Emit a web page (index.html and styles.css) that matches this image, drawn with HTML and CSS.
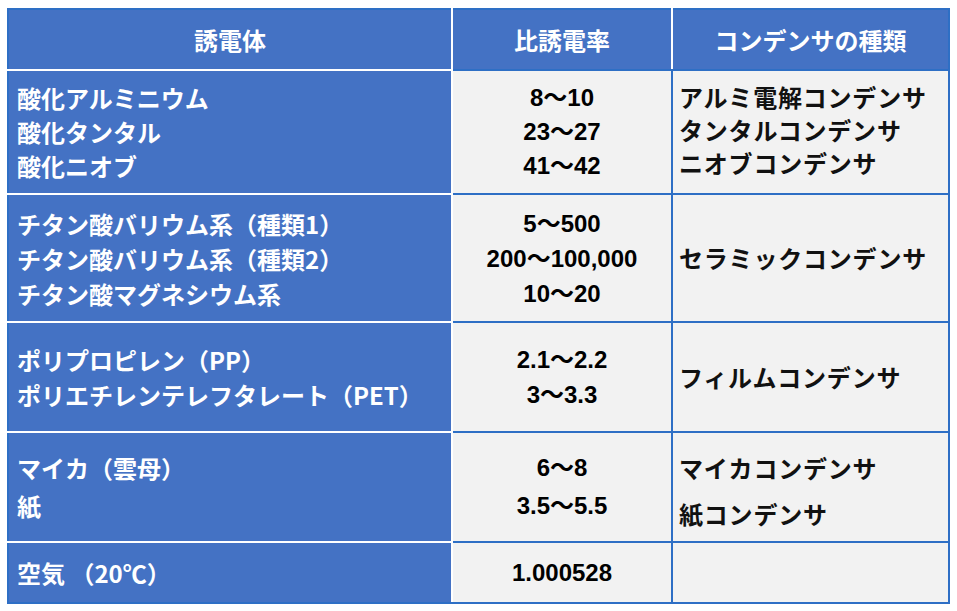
FILE: index.html
```html
<!DOCTYPE html>
<html lang="ja">
<head>
<meta charset="utf-8">
<title>誘電体と比誘電率</title>
<link rel="stylesheet" href="styles.css">
</head>
<body>
<table class="tbl">
  <colgroup>
    <col class="c1">
    <col class="c2">
    <col class="c3">
  </colgroup>
  <thead>
    <tr class="r-head">
      <th class="h h1">誘電体</th>
      <th class="h h2">比誘電率</th>
      <th class="h h3">コンデンサの種類</th>
    </tr>
  </thead>
  <tbody>
    <tr class="r1">
      <td class="name lh34">酸化アルミニウム<br>酸化タンタル<br>酸化ニオブ</td>
      <td class="val lh34">8～10<br>23～27<br>41～42</td>
      <td class="kind lh33 up">アルミ電解コンデンサ<br>タンタルコンデンサ<br>ニオブコンデンサ</td>
    </tr>
    <tr class="r2">
      <td class="name lh35">チタン酸バリウム系（種類1）<br>チタン酸バリウム系（種類2）<br>チタン酸マグネシウム系</td>
      <td class="val lh35">5～500<br>200～100,000<br>10～20</td>
      <td class="kind">セラミックコンデンサ</td>
    </tr>
    <tr class="r3">
      <td class="name lh35">ポリプロピレン（PP）<br>ポリエチレンテレフタレート（PET）</td>
      <td class="val lh35">2.1～2.2<br>3～3.3</td>
      <td class="kind">フィルムコンデンサ</td>
    </tr>
    <tr class="r4">
      <td class="name lh38">マイカ（雲母）<br>紙</td>
      <td class="val lh38">6～8<br>3.5～5.5</td>
      <td class="kind lh46 shift">マイカコンデンサ<br>紙コンデンサ</td>
    </tr>
    <tr class="r5">
      <td class="name">空気 （20℃）</td>
      <td class="val">1.000528</td>
      <td class="kind"></td>
    </tr>
  </tbody>
</table>
</body>
</html>
```

FILE: styles.css
```css
html, body {
  margin: 0;
  padding: 0;
  background: #ffffff;
}

.tbl {
  margin: 8px 0 0 7px;
  border-collapse: collapse;
  table-layout: fixed;
  width: 941px;
  border: 2px solid #2e6fc5;
  font-size: 24px;
  font-weight: 700;
}

.c1 { width: 444px; }
.c2 { width: 220px; }
.c3 { width: 277px; }

.r-head { height: 61px; }
.r1 { height: 124px; }
.r2 { height: 128px; }
.r3 { height: 110px; }
.r4 { height: 110px; }
.r5 { height: 61px; }

.tbl th,
.tbl td {
  padding: 0;
  vertical-align: middle;
  line-height: 30px;
}

.h {
  background: #4472c4;
  color: #ffffff;
  text-align: center;
  font-family: "Noto Sans CJK JP", sans-serif;
  font-weight: 700;
  border-right: 2px solid #ffffff;
  border-bottom: 2px solid #2e6fc5;
}

.h1 { border-bottom-color: #ffffff; }
.h3 { border-right-color: #2e6fc5; }

.name {
  background: #4472c4;
  color: #ffffff;
  font-family: "Noto Sans CJK JP", sans-serif;
  padding-left: 8px !important;
  border-right: 2px solid #ffffff;
  border-bottom: 2px solid #ffffff;
  white-space: nowrap;
}

.val {
  background: #f2f2f2;
  color: #000000;
  text-align: center;
  font-family: "Liberation Sans", "Noto Sans CJK JP", sans-serif;
  border-right: 2px solid #2e6fc5;
  border-bottom: 2px solid #2e6fc5;
}

.kind {
  background: #f2f2f2;
  color: #111111;
  font-family: "Noto Sans CJK JP", sans-serif;
  padding-left: 6px !important;
  letter-spacing: 0.8px;
  border-bottom: 2px solid #2e6fc5;
  white-space: nowrap;
}

.r5 .name,
.r5 .val,
.r5 .kind {
  border-bottom-color: #2e6fc5;
}

.lh33 { line-height: 33px !important; }
.lh34 { line-height: 34px !important; }
.lh35 { line-height: 35px !important; }
.lh38 { line-height: 38px !important; }
.lh46 { line-height: 46px !important; }
.shift { padding-top: 8px !important; }
.up { padding-bottom: 6px !important; }
```
